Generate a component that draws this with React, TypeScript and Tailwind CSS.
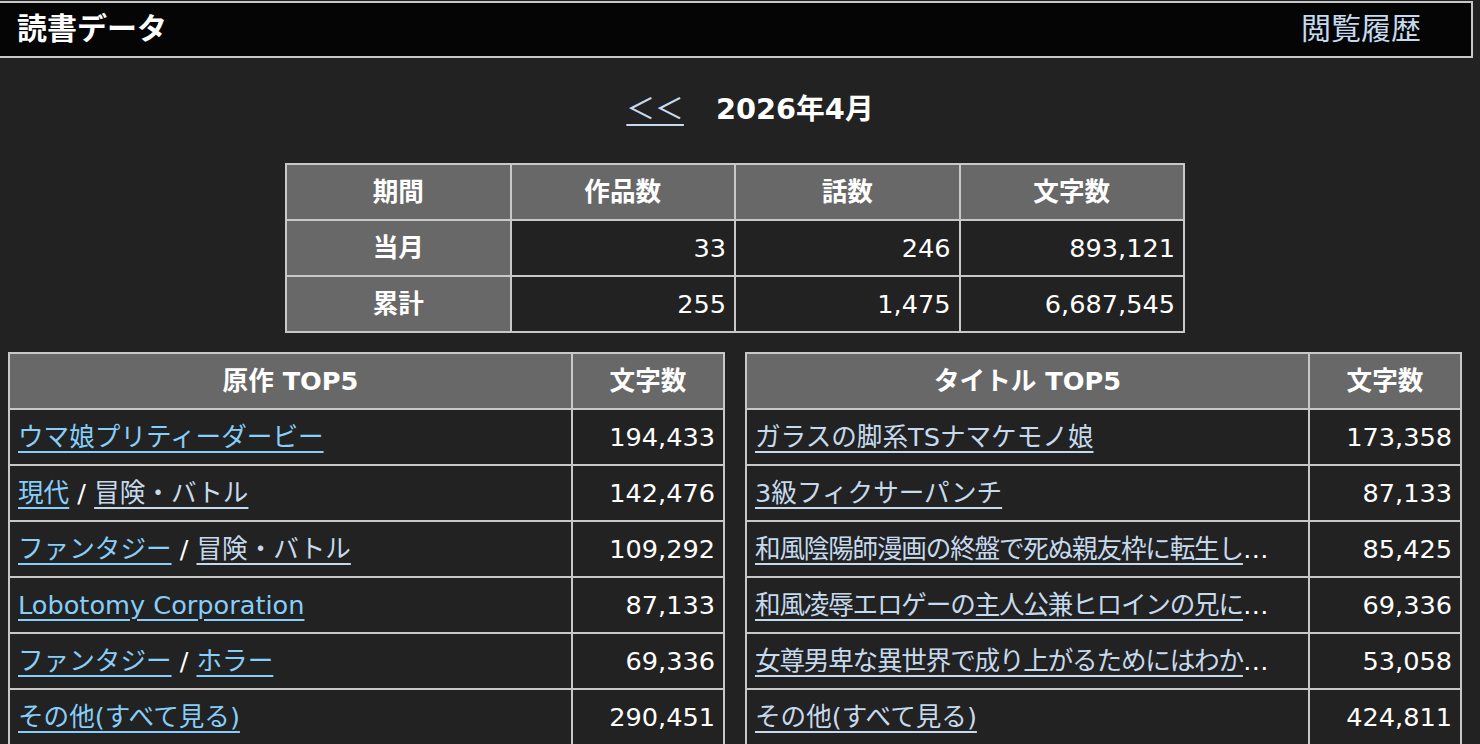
import React from "react";

const FONT = { fontFamily: '"DejaVu Sans", "Noto Sans CJK JP", sans-serif' };

const NEW = "text-[#87cefa] underline underline-offset-[5px] decoration-[2px]";
const OLD = "text-[#c6daee] underline underline-offset-[5px] decoration-[2px]";

type Part = { t: string; v?: boolean };

const leftRows: { parts: Part[]; n: string }[] = [
  { parts: [{ t: "ウマ娘プリティーダービー" }], n: "194,433" },
  { parts: [{ t: "現代" }, { t: "冒険・バトル", v: true }], n: "142,476" },
  { parts: [{ t: "ファンタジー" }, { t: "冒険・バトル", v: true }], n: "109,292" },
  { parts: [{ t: "Lobotomy Corporation" }], n: "87,133" },
  { parts: [{ t: "ファンタジー" }, { t: "ホラー" }], n: "69,336" },
  { parts: [{ t: "その他(すべて見る)" }], n: "290,451" },
];

const rightRows: { t: string; n: string; tight?: boolean }[] = [
  { t: "ガラスの脚系TSナマケモノ娘", n: "173,358" },
  { t: "3級フィクサーパンチ", n: "87,133" },
  { t: "和風陰陽師漫画の終盤で死ぬ親友枠に転生したので生き残りたい", n: "85,425", tight: true },
  { t: "和風凌辱エロゲーの主人公兼ヒロインの兄になったので", n: "69,336", tight: true },
  { t: "女尊男卑な異世界で成り上がるためにはわからせるしかない", n: "53,058", tight: true },
  { t: "その他(すべて見る)", n: "424,811" },
];

const B = "border-2 border-[#c8c8c8]";

export default function App() {
  return (
    <div className="min-h-[744px] w-[1480px] bg-[#222222] text-white overflow-hidden" style={FONT}>
      <div className="w-[1473px] pt-px">
        <div className="h-[57px] bg-[#050505] border-t-2 border-r-2 border-b-2 border-[#c8c8c8] flex items-center justify-between pl-[17px] pr-[50px]">
          <div className="text-[30px] font-bold leading-none -mt-[2px]">読書データ</div>
          <div className="text-[30px] leading-none text-[#c6daee] -mt-[2px]">閲覧履歴</div>
        </div>
      </div>

      <div className="w-[1472px] flex justify-center items-center gap-[32px] h-[102px] pl-[28px]">
        <a className={OLD + " text-[28.8px] leading-none"}>＜＜</a>
        <span className="text-[28.8px] font-bold leading-none">2026年4月</span>
      </div>

      <div className="w-[1472px] flex justify-center mt-[3px] pr-[2px]">
        <table className={"border-collapse table-fixed w-[900px] text-[25.6px] " + B}>
          <tbody>
            <tr>
              {["期間", "作品数", "話数", "文字数"].map((h) => (
                <th key={h} className={B + " bg-[#686868] h-[56px] font-bold text-center"}>
                  {h}
                </th>
              ))}
            </tr>
            {[
              ["当月", "33", "246", "893,121"],
              ["累計", "255", "1,475", "6,687,545"],
            ].map((r) => (
              <tr key={r[0]}>
                <th className={B + " bg-[#686868] h-[56px] font-bold text-center"}>{r[0]}</th>
                {r.slice(1).map((c, i) => (
                  <td key={i} className={B + " h-[56px] text-right pr-[8px]"}>
                    {c}
                  </td>
                ))}
              </tr>
            ))}
          </tbody>
        </table>
      </div>

      <div className="w-[1472px] flex gap-[20px] pl-[8px] mt-[19px]">
        <table className={"border-collapse text-[25.6px] table-fixed w-[715px] " + B}>
          <colgroup>
            <col className="w-[563px]" />
            <col className="w-[152px]" />
          </colgroup>
          <tbody>
            <tr>
              <th className={B + " bg-[#686868] h-[56px] font-bold text-center"}>原作 TOP5</th>
              <th className={B + " bg-[#686868] h-[56px] font-bold text-center"}>文字数</th>
            </tr>
            {leftRows.map((r, i) => (
              <tr key={i}>
                <td className={B + " h-[56px] px-[8px] whitespace-nowrap"}>
                  {r.parts.map((p, j) => (
                    <React.Fragment key={j}>
                      {j > 0 && <span> / </span>}
                      <a className={p.v ? OLD : NEW}>{p.t}</a>
                    </React.Fragment>
                  ))}
                </td>
                <td className={B + " h-[56px] text-right pr-[8px]"}>{r.n}</td>
              </tr>
            ))}
          </tbody>
        </table>

        <table className={"border-collapse text-[25.6px] table-fixed w-[715px] " + B}>
          <colgroup>
            <col className="w-[563px]" />
            <col className="w-[152px]" />
          </colgroup>
          <tbody>
            <tr>
              <th className={B + " bg-[#686868] h-[56px] font-bold text-center"}>タイトル TOP5</th>
              <th className={B + " bg-[#686868] h-[56px] font-bold text-center"}>文字数</th>
            </tr>
            {rightRows.map((r, i) => (
              <tr key={i}>
                <td className={B + " h-[56px] px-[8px]"}>
                  <div className={"truncate w-[537px] " + (r.tight ? "tracking-[-1.2px]" : "")}>
                    <a className={OLD}>{r.t}</a>
                  </div>
                </td>
                <td className={B + " h-[56px] text-right pr-[8px]"}>{r.n}</td>
              </tr>
            ))}
          </tbody>
        </table>
      </div>
    </div>
  );
}
